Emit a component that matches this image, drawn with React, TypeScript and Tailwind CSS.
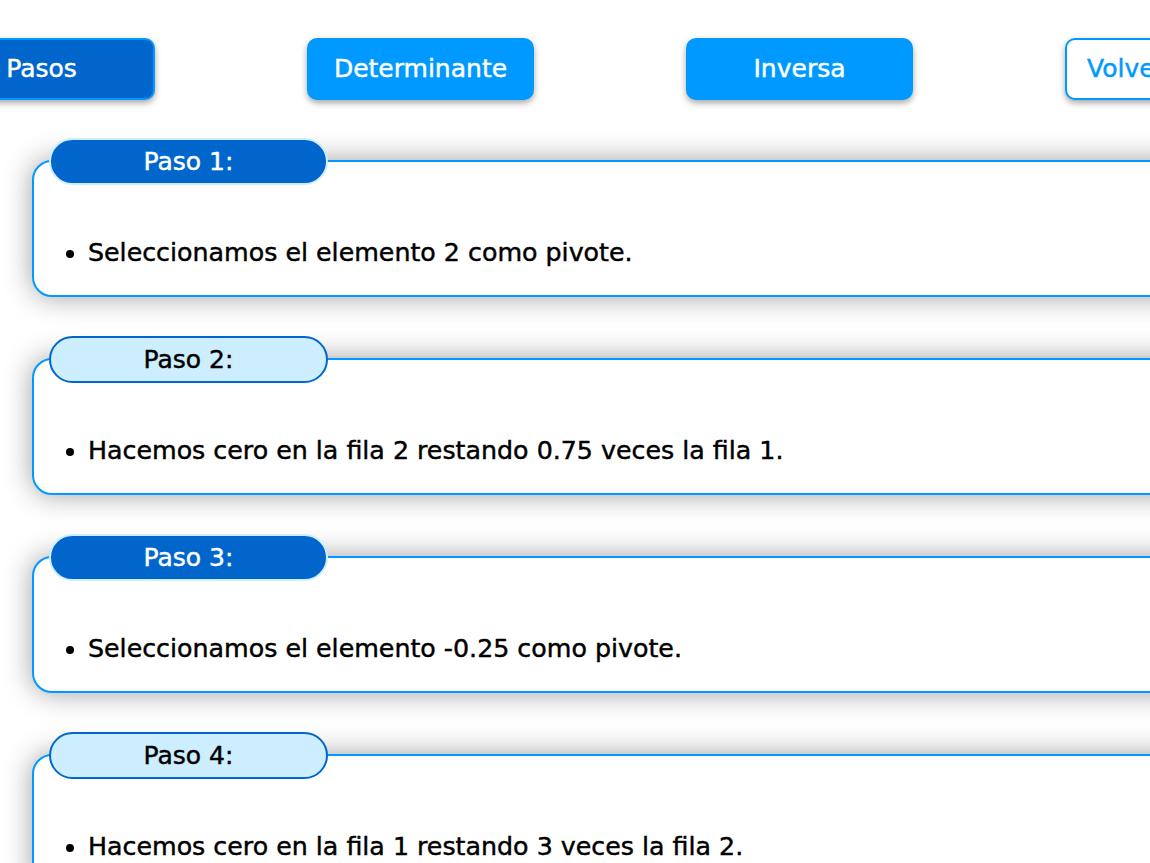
import React from "react";

const steps = [
  { n: 1, text: "Seleccionamos el elemento 2 como pivote.", active: true },
  { n: 2, text: "Hacemos cero en la fila 2 restando 0.75 veces la fila 1.", active: false },
  { n: 3, text: "Seleccionamos el elemento -0.25 como pivote.", active: true },
  { n: 4, text: "Hacemos cero en la fila 1 restando 3 veces la fila 2.", active: false },
];

export default function App() {
  return (
    <div
      className="w-[1150px] h-[863px] overflow-hidden bg-white [-webkit-text-stroke:0.45px_currentColor]"
      style={{ fontFamily: '"DejaVu Sans", "Noto Sans", sans-serif' }}
    >
      <div className="flex gap-[152px] ml-[-72px] pt-[38px]">
        <button className="w-[227px] h-[62px] shrink-0 rounded-[10px] bg-[#0066cc] border-2 border-[#0099ff] text-white text-[25px] shadow-[0_3px_6px_rgba(0,0,0,0.35)] flex items-center justify-center">
          Pasos
        </button>
        <button className="w-[227px] h-[62px] shrink-0 rounded-[10px] bg-[#0099ff] text-white text-[25px] shadow-[0_3px_6px_rgba(0,0,0,0.35)] flex items-center justify-center">
          Determinante
        </button>
        <button className="w-[227px] h-[62px] shrink-0 rounded-[10px] bg-[#0099ff] text-white text-[25px] shadow-[0_3px_6px_rgba(0,0,0,0.35)] flex items-center justify-center">
          Inversa
        </button>
        <button className="w-[227px] h-[62px] shrink-0 rounded-[10px] bg-white border-2 border-[#0099ff] text-[#0099ff] text-[25px] shadow-[0_3px_6px_rgba(0,0,0,0.35)] flex items-center justify-start pl-[20px]">
          Volver
        </button>
      </div>

      <div className="flex flex-col gap-[61px] pl-[32px] pt-[60px]">
        {steps.map((s) => (
          <div
            key={s.n}
            className="relative w-[1250px] h-[137px] shrink-0 border-2 border-[#0099ff] rounded-[20px] bg-white shadow-[0_0_28px_rgba(0,0,0,0.38)]"
          >
            <div
              className={
                "absolute left-[15px] top-[-24px] w-[279px] h-[47px] rounded-full border-2 flex items-center justify-center text-[25px] " +
                (s.active
                  ? "bg-[#0066cc] border-[#cceeff] text-white"
                  : "bg-[#cceeff] border-[#0066cc] text-black")
              }
            >
              Paso {s.n}:
            </div>
            <ul className="list-disc pl-[54px] pt-[73px] text-[25.3px] leading-[36px] text-black">
              <li>{s.text}</li>
            </ul>
          </div>
        ))}
      </div>
    </div>
  );
}
